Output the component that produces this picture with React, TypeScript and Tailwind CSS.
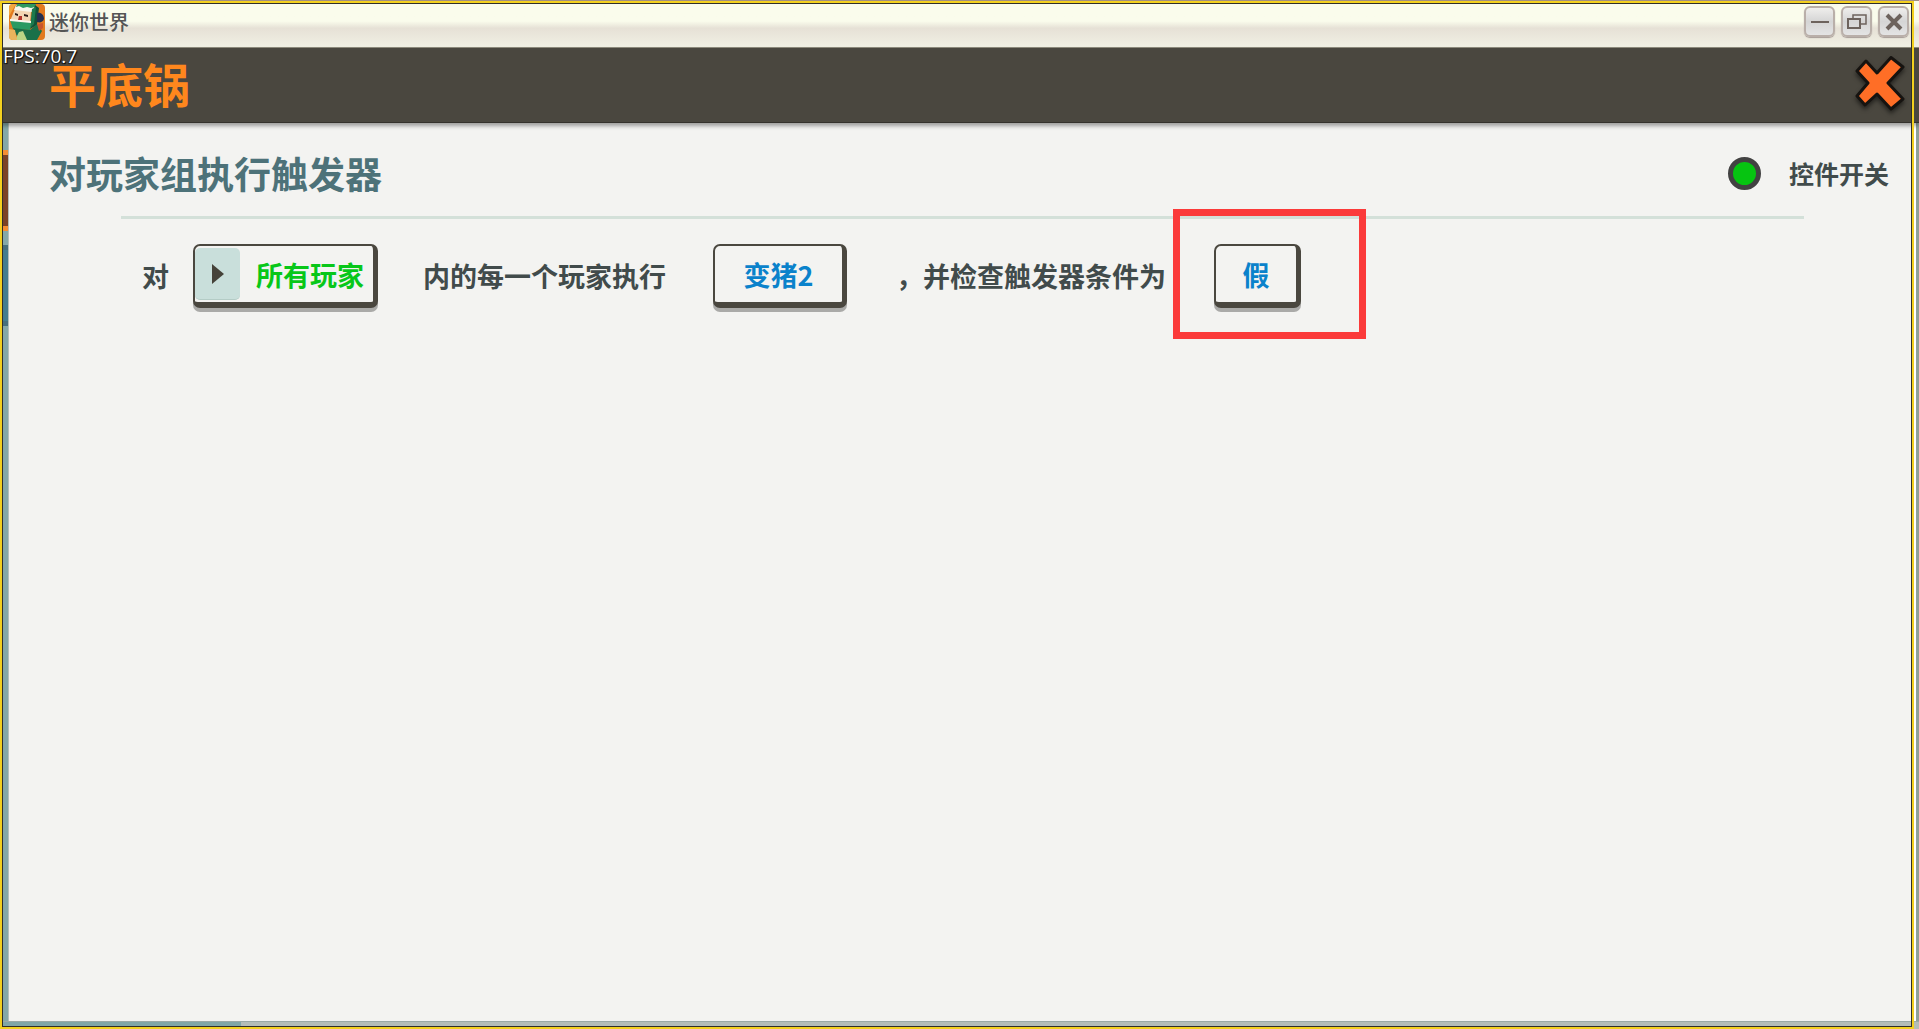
import type { ReactNode } from 'react'
import clsx from 'clsx'

function AppLogo() {
  return (
    <svg viewBox="0 0 36 36" className="h-9 w-9 shrink-0" aria-hidden="true">
      <defs>
        <clipPath id="logo"><rect width="36" height="36" rx="4" /></clipPath>
      </defs>
      <g clipPath="url(#logo)">
        <rect width="36" height="36" fill="#e27a1e" />
        <path d="M0 12L7 0H0Z" fill="#f2a640" />
        <path d="M6 5L22 7L21 20L1 17Z" fill="#f3d6b4" />
        <path d="M7 1L26 2L23 8L5 6Z" fill="#f7f6ec" />
        <path d="M8 0H27L26 3L22 4L18 3L14 4L10 2L7 3Z" fill="#2f9a5f" />
        <path d="M26 1L30 4L28 21L21 25Z" fill="#125138" />
        <path d="M23 5L27 3L25 20L21 24Z" fill="#1c7a4d" />
        <path d="M28 9C32 8 35 11 35 15C34 18 31 19 28 18Z" fill="#26304f" />
        <path d="M1 16L22 18L21 26L4 25Z" fill="#2a9a62" />
        <path d="M1 15L22 17V19L1 17Z" fill="#fbf7ee" />
        <path d="M4 24L21 26L28 20L33 27L28 36H10Z" fill="#1a7049" />
        <path d="M10 28L14 27L18 36H6Z" fill="#b9d585" />
        <path d="M0 25L6 26L8 36H0Z" fill="#e9b45c" />
        <path d="M28 20L34 19L34 24L30 27Z" fill="#c9552d" />
        <path d="M6 9L9 10V12L6 11ZM15 10L19 11V13L15 12Z" fill="#2b1b18" />
        <path d="M10 12H13V16H9Z" fill="#b5322a" />
      </g>
    </svg>
  )
}

function WindowButton({ label, children }: { label: string; children: ReactNode }) {
  return (
    <button aria-label={label} className="flex h-[31px] w-[31px] items-center justify-center rounded-md border-2 border-[#b9afa9] bg-linear-to-b from-[#efeeec] via-[#d5d5d5] to-[#e4e4e4] shadow-[0_1px_1px_#a79c96]">
      <svg viewBox="0 0 24 24" className="h-6 w-6 shrink-0" fill="none" stroke="#6d635d" strokeWidth="2">{children}</svg>
    </button>
  )
}

function TitleBar() {
  return (
    <header className="flex h-12 items-start border-b border-[#8f8d7e] bg-linear-to-b from-[#fafcec] from-45% via-[#e6e1d6] via-60% to-[#f1f0e4] pt-1 pr-[10px] pl-[9px]">
      <AppLogo />
      <span className="ml-1 text-[20px] leading-9 font-medium text-[#555]">迷你世界</span>
      <div className="ml-auto flex gap-[6px] pt-[2px]">
        <WindowButton label="最小化"><path d="M3 12H21" /></WindowButton>
        <WindowButton label="还原">
          <path d="M3 9H15V18H3Z" />
          <path d="M8 8V5H21V14H16" strokeWidth="1.5" />
        </WindowButton>
        <WindowButton label="关闭"><path d="M5 5L19 19M19 5L5 19" strokeWidth="4" /></WindowButton>
      </div>
    </header>
  )
}

function PageHeader() {
  return (
    <div className="relative z-10 flex h-[75px] items-start justify-between border-b border-[#35332d] bg-[#4a473f] pt-2 pr-[14px] pl-[49px] shadow-[0_3px_4px_rgba(0,0,0,0.35)]">
      <span className="absolute top-0 left-[3px] font-['Open_Sans','Noto_Sans',sans-serif] text-[19px] leading-4 text-white [text-shadow:1px_1px_1px_#000,-1px_1px_1px_#222]">FPS:70.7</span>
      <h1 className="text-[47px] leading-[54px] font-bold text-[#ff871d]">平底锅</h1>
      <button aria-label="关闭页面" className="drop-shadow-[0_3px_2px_rgba(0,0,0,0.5)]">
        <svg viewBox="0 0 50 56" className="h-14 w-[50px]" fill="#ff6e26" stroke="#161310" strokeWidth="3" strokeLinejoin="round">
          <path d="M11 5L22 17L36 1.5L48 11L33 27L48 43L36 53L22 38L10 49L2 40L13 27L2 15Z" />
        </svg>
      </button>
    </div>
  )
}

// slivers of the editor that stays open behind the panel
function BackdropEdge() {
  return (
    <div className="flex w-[9px] shrink-0 flex-col border-r border-[#b5bfba] bg-[#84a8a8]">
      <div className="mt-[27px] h-[81px] border-y-[5px] border-[#f58f33] bg-[#7b4326]" />
      <div className="mt-[14px] h-[81px] border-y-[5px] border-[#466f7d] bg-[#437d8e]" />
    </div>
  )
}

function ParamButton({ color, className, children }: { color: string; className: string; children: ReactNode }) {
  return (
    <button className={clsx('flex h-16 shrink-0 items-center rounded-[7px] border-2 border-r-[5px] border-b-[6px] border-[#4a473f] bg-[#f3f3f1] font-bold whitespace-nowrap shadow-[0_4px_0_#aaaaa8]', color, className)}>
      {children}
    </button>
  )
}

export default function App() {
  return (
    <div className="relative flex min-h-screen flex-col bg-[#f3f3f1] font-['Noto_Sans_CJK_SC',sans-serif]">
      <TitleBar />
      <PageHeader />

      <div className="flex grow">
        <BackdropEdge />
        <main className="min-w-0 grow">
          <div className="flex h-[93px] items-center justify-between pt-[7px] pr-6 pl-10">
            <h2 className="text-[37px] leading-[48px] font-bold text-[#4d7279]">对玩家组执行触发器</h2>
            <label className="flex items-center gap-7 text-[25px] leading-8 font-bold text-[#414b4b]">
              <input type="checkbox" defaultChecked className="h-[33px] w-[33px] appearance-none rounded-full border-[5px] border-[#424242] bg-[#555] checked:bg-[#06c411]" />
              控件开关
            </label>
          </div>
          <hr className="mr-[109px] ml-28 border-t-[3px] border-[#d3e0d9]" />

          <div className="flex items-center pt-[25px] pl-[133px] text-[27px] leading-8 font-bold whitespace-nowrap text-[#414b4b]">
            <span>对</span>
            <ParamButton color="text-[#08c719]" className="ml-6 w-[185px]">
              <span className="flex h-[52px] w-[45px] items-center justify-center rounded-[5px] border-b border-[#b4ccc6] bg-[#c9dfdb]">
                <svg viewBox="0 0 12 20" className="h-5 w-3" fill="#454239"><path d="M0 0L12 10L0 20Z" /></svg>
              </span>
              <span className="ml-4 pt-[2px]">所有玩家</span>
            </ParamButton>
            <span className="ml-[45px]">内的每一个玩家执行</span>
            <ParamButton color="text-[#0a82cb]" className="ml-[47px] w-[134px] justify-center pt-[2px]">变猪2</ParamButton>
            <span className="ml-[49px]">，并检查触发器条件为</span>
            <div className="relative ml-12">
              <ParamButton color="text-[#0a82cb]" className="w-[87px] justify-center pt-[2px]">假</ParamButton>
              <div className="pointer-events-none absolute -top-[35px] -left-[41px] h-[130px] w-[193px] border-[7px] border-[#fb3a3a]" />
            </div>
          </div>
        </main>
        <div className="w-[6px] shrink-0 border-r-[3px] border-[#8fa198] bg-white" />
      </div>

      <div className="flex h-2 shrink-0 border-t border-[#9aa9a5] bg-[#b4bdb8]">
        <div className="w-[241px] bg-[#80a6a7]" />
      </div>

      {/* capture frame */}
      <div className="pointer-events-none absolute top-px right-[5px] bottom-0 left-0 z-20 border-2 border-[#f3d01f]">
        <div className="h-full border border-[#2f2e2a]" />
      </div>
      <div className="absolute inset-x-0 top-0 z-20 h-px bg-[#a08f83]" />
    </div>
  )
}
